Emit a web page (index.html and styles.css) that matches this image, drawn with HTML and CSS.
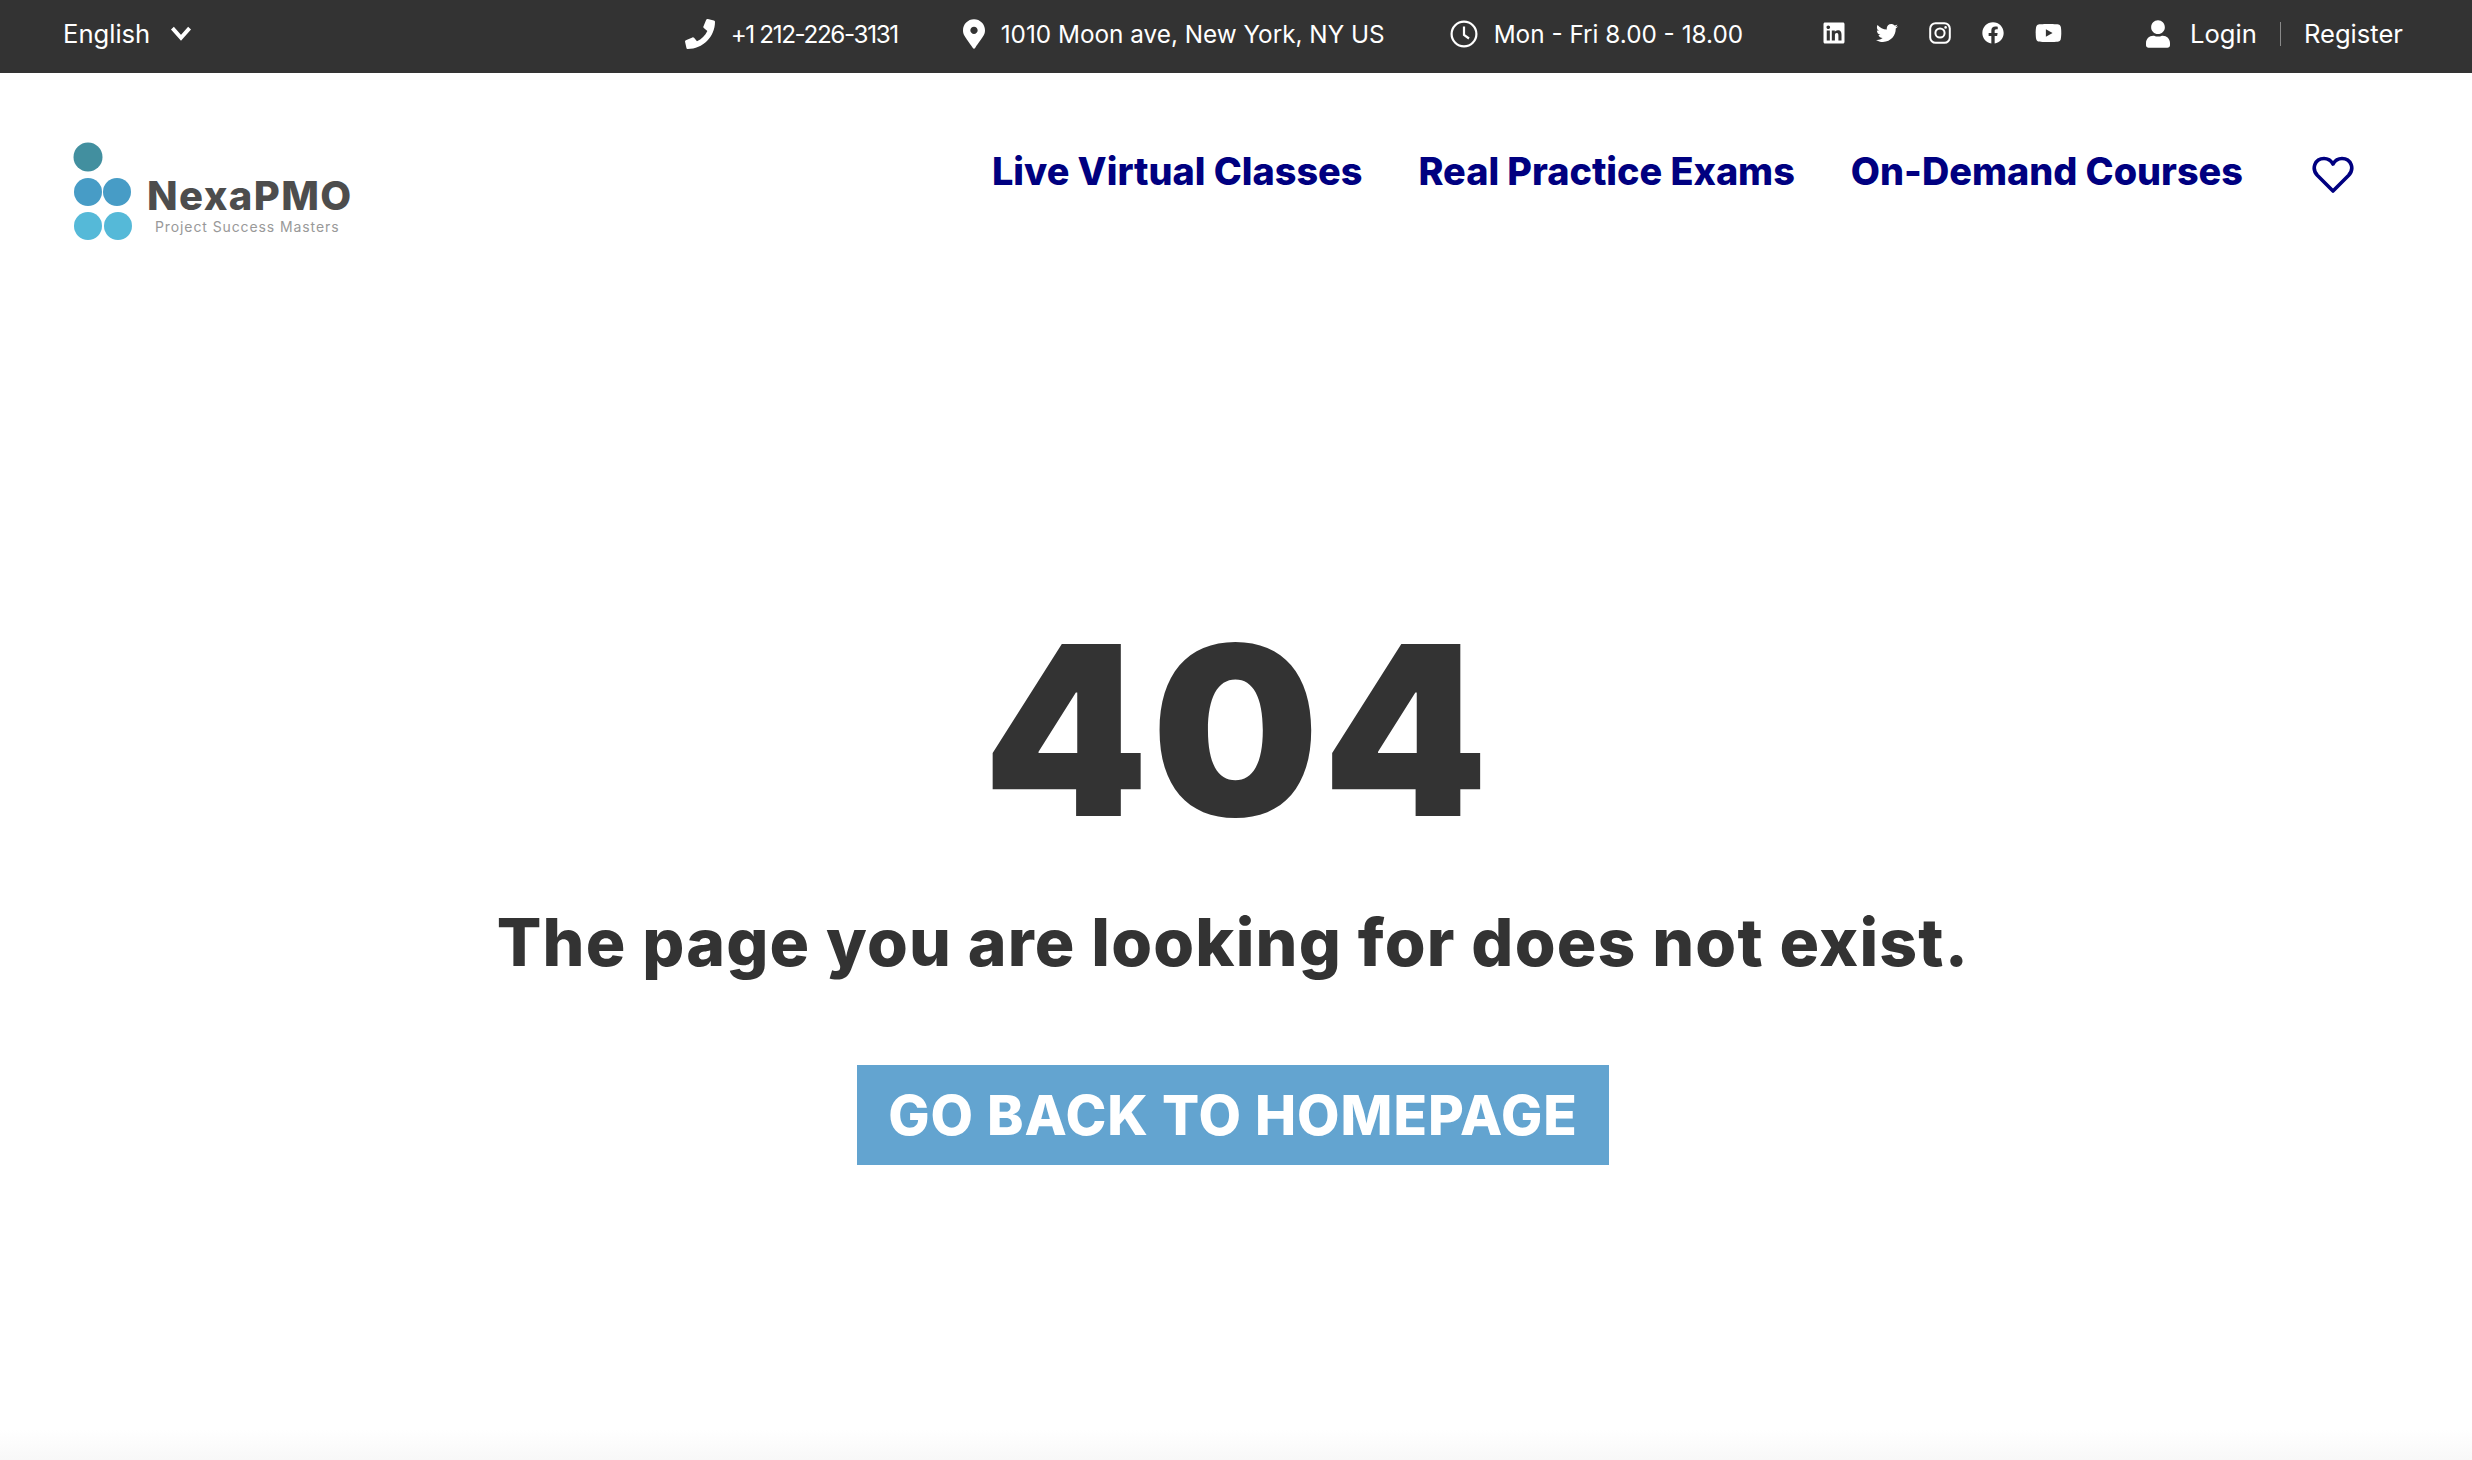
FILE: index.html
```html
<!DOCTYPE html>
<html lang="en">
  <head>
    <meta charset="UTF-8" />
    <meta name="viewport" content="width=device-width, initial-scale=1.0" />
    <title>NexaPMO - Page not found</title>
    <link rel="stylesheet" href="styles.css">
  </head>
  <body>
    <div class="topbar">
      <div class="lang">
        <span>English</span>
        <svg class="chevron" viewBox="0 0 20 14"><polyline points="2,2 10,11 18,2" /></svg>
      </div>

      <div class="contact">
        <div class="contact-item">
          <svg class="icon" viewBox="0 0 512 512"><path d="M493.4 24.6l-104-24c-11.3-2.6-22.9 3.3-27.5 13.9l-48 112c-4.2 9.8-1.4 21.3 6.9 28l60.6 49.6c-36 76.7-98.9 140.5-177.2 177.2l-49.6-60.6c-6.8-8.3-18.2-11.1-28-6.9l-112 48C3.9 366.5-2 378.1.6 389.4l24 104C27.1 504.2 36.7 512 48 512c256.1 0 464-207.5 464-464 0-11.2-7.7-20.9-18.6-23.4z"/></svg>
          <span class="phone-number">+1 212-226-3131</span>
        </div>
        <div class="contact-item">
          <svg class="icon pin" viewBox="0 0 384 512"><path d="M172.268 501.67C26.97 291.031 0 269.413 0 192 0 85.961 85.961 0 192 0s192 85.961 192 192c0 77.413-26.97 99.031-172.268 309.67-9.535 13.774-29.93 13.773-39.464 0zM192 256c35.3 0 64-28.7 64-64s-28.7-64-64-64-64 28.7-64 64 28.7 64 64 64z"/></svg>
          <span>1010 Moon ave, New York, NY US</span>
        </div>
        <div class="contact-item">
          <svg class="icon clock" viewBox="0 0 28 28"><circle cx="14" cy="14" r="12.4" /><polyline points="14,6.5 14,15 19,18.5" /></svg>
          <span>Mon - Fri 8.00 - 18.00</span>
        </div>
      </div>

      <div class="socials">
        <svg class="social" viewBox="0 0 448 512"><path d="M416 32H31.9C14.3 32 0 46.5 0 64.3v383.4C0 465.5 14.3 480 31.9 480H416c17.6 0 32-14.5 32-32.3V64.3c0-17.8-14.4-32.3-32-32.3zM135.4 416H69V202.2h66.5V416zm-33.2-243c-21.3 0-38.5-17.3-38.5-38.5S80.9 96 102.2 96c21.2 0 38.5 17.3 38.5 38.5 0 21.3-17.2 38.5-38.5 38.5zm282.1 243h-66.4V312c0-24.8-.5-56.7-34.5-56.7-34.6 0-39.9 27-39.9 54.9V416h-66.4V202.2h63.7v29.2h.9c8.9-16.8 30.6-34.5 62.9-34.5 67.2 0 79.7 44.3 79.7 101.9V416z"/></svg>
        <svg class="social" viewBox="0 0 512 512"><path d="M459.37 151.716c.325 4.548.325 9.097.325 13.645 0 138.72-105.583 298.558-298.558 298.558-59.452 0-114.68-17.219-161.137-47.106 8.447.974 16.568 1.299 25.34 1.299 49.055 0 94.213-16.568 130.274-44.832-46.132-.975-84.792-31.188-98.112-72.772 6.498.974 12.995 1.624 19.818 1.624 9.421 0 18.843-1.3 27.614-3.573-48.081-9.747-84.143-51.98-84.143-102.985v-1.299c13.969 7.797 30.214 12.67 47.431 13.319-28.264-18.843-46.781-51.005-46.781-87.391 0-19.492 5.197-37.36 14.294-52.954 51.655 63.675 129.3 105.258 216.365 109.807-1.624-7.797-2.599-15.918-2.599-24.04 0-57.828 46.782-104.934 104.934-104.934 30.213 0 57.502 12.67 76.67 33.137 23.715-4.548 46.456-13.32 66.599-25.34-7.798 24.366-24.366 44.833-46.132 57.827 21.117-2.273 41.584-8.122 60.426-16.243-14.292 20.791-32.161 39.308-52.628 54.253z"/></svg>
        <svg class="social insta" viewBox="0 0 22 22"><rect x="1.2" y="1.2" width="19.6" height="19.6" rx="5.4" /><circle cx="11" cy="11" r="4.6" /><circle class="dot" cx="16.6" cy="5.4" r="1.3" /></svg>
        <svg class="social" viewBox="0 0 512 512"><path d="M504 256C504 119 393 8 256 8S8 119 8 256c0 123.78 90.69 226.38 209.25 245V327.69h-63V256h63v-54.64c0-62.15 37-96.48 93.67-96.48 27.14 0 55.52 4.84 55.52 4.84v61h-31.28c-30.8 0-40.41 19.12-40.41 38.73V256h68.78l-11 71.69h-57.78V501C413.31 482.38 504 379.78 504 256z"/></svg>
        <svg class="social yt" viewBox="0 0 576 512"><path d="M549.655 124.083c-6.281-23.65-24.787-42.276-48.284-48.597C458.781 64 288 64 288 64S117.22 64 74.629 75.486c-23.497 6.322-42.003 24.947-48.284 48.597-11.412 42.867-11.412 132.305-11.412 132.305s0 89.438 11.412 132.305c6.281 23.65 24.787 41.5 48.284 47.821C117.22 448 288 448 288 448s170.78 0 213.371-11.486c23.497-6.321 42.003-24.171 48.284-47.821 11.412-42.867 11.412-132.305 11.412-132.305s0-89.438-11.412-132.305zm-317.51 213.508V175.185l142.739 81.205-142.739 81.201z"/></svg>
      </div>

      <div class="account">
        <svg class="icon user" viewBox="0 0 448 512"><path d="M224 256c70.7 0 128-57.3 128-128S294.7 0 224 0 96 57.3 96 128s57.3 128 128 128zm89.6 32h-16.7c-22.2 10.2-46.9 16-72.9 16s-50.6-5.8-72.9-16h-16.7C60.2 288 0 348.2 0 422.4V464c0 26.5 21.5 48 48 48h352c26.5 0 48-21.5 48-48v-41.6c0-74.2-60.2-134.4-134.4-134.4z"/></svg>
        <a class="login" href="#">Login</a>
        <a class="register" href="#">Register</a>
      </div>
    </div>

    <header class="header">
      <a class="logo" href="#">
        <svg class="logo-dots" viewBox="0 0 62 102">
          <circle cx="16" cy="15" r="14.5" fill="#428f9f" />
          <circle cx="16" cy="50" r="14" fill="#479cc6" />
          <circle cx="45" cy="50" r="14" fill="#479cc6" />
          <circle cx="16" cy="84" r="14" fill="#55b9d8" />
          <circle cx="46" cy="84" r="14" fill="#55b9d8" />
        </svg>
        <div class="logo-text">
          <span class="logo-name">NexaPMO</span>
          <span class="logo-tag">Project Success Masters</span>
        </div>
      </a>

      <nav class="nav">
        <a href="#">Live Virtual Classes</a>
        <a href="#">Real Practice Exams</a>
        <a href="#">On-Demand Courses</a>
        <svg class="heart" viewBox="0 0 42 38"><path d="M21 35 L5.5 19.5 C-1 12.5 3 2.5 12 2.5 C16 2.5 19 4.5 21 8 C23 4.5 26 2.5 30 2.5 C39 2.5 43 12.5 36.5 19.5 Z" /></svg>
      </nav>
    </header>

    <main class="error-page">
      <h1 class="error-code">404</h1>
      <h2 class="error-text">The page you are looking for does not exist.</h2>
      <a class="home-btn" href="#">GO BACK TO HOMEPAGE</a>
    </main>

    <div class="bottom-fade"></div>
  </body>
</html>
```

FILE: styles.css
```css
* {
  box-sizing: border-box;
}
html,
body {
  height: 100%;
}
body {
  margin: 0;
  display: flex;
  flex-direction: column;
  font-family: Inter, "Liberation Sans", sans-serif;
  background: #ffffff;
  color: #333333;
  overflow: hidden;
}
a {
  color: inherit;
  text-decoration: none;
}

/* top bar */
.topbar {
  display: flex;
  align-items: center;
  height: 73px;
  padding: 0 69px 6px 63px;
  background: #333333;
  color: #ffffff;
  font-size: 24.3px;
  flex-shrink: 0;
}
.lang {
  display: flex;
  align-items: center;
  gap: 20px;
  font-size: 25.6px;
}
.chevron {
  width: 22px;
  height: 15px;
  fill: none;
  stroke: #ffffff;
  stroke-width: 3.6;
}
.contact {
  display: flex;
  align-items: center;
  gap: 65px;
  margin-left: auto;
}
.contact-item {
  display: flex;
  align-items: center;
  gap: 16px;
}
.phone-number {
  letter-spacing: -1.4px;
}
.icon {
  width: 30px;
  height: 30px;
  fill: #ffffff;
  flex-shrink: 0;
}
.pin {
  width: 22px;
}
.clock {
  width: 28px;
  height: 28px;
  fill: none;
  stroke: #ffffff;
  stroke-width: 2.2;
}
.socials {
  display: flex;
  align-items: center;
  gap: 31px;
  margin-left: 80px;
  margin-bottom: 2px;
}
.social {
  width: 22px;
  height: 24px;
  fill: #ffffff;
}
.insta {
  fill: none;
  stroke: #ffffff;
  stroke-width: 2;
}
.insta .dot {
  fill: #ffffff;
  stroke: none;
}
.yt {
  width: 27px;
}
.account {
  display: flex;
  align-items: center;
  margin-left: 84px;
  font-size: 25.6px;
}
.user {
  width: 24px;
  height: 28px;
  margin-right: 20px;
}
.login {
  padding-right: 23px;
  border-right: 1px solid #8a8a8a;
  line-height: 24px;
}
.register {
  padding-left: 23px;
}

/* logo and nav */
.header {
  display: flex;
  justify-content: space-between;
  align-items: flex-start;
  padding: 69px 118px 0 72px;
  flex-shrink: 0;
}
.logo {
  display: flex;
  align-items: flex-end;
  gap: 13px;
}
.logo-dots {
  width: 62px;
  height: 102px;
}
.logo-text {
  display: flex;
  flex-direction: column;
  padding-bottom: 8px;
}
.logo-name {
  font-size: 40px;
  font-weight: 800;
  line-height: 44px;
  letter-spacing: 1.4px;
  color: #4d4d4d;
}
.logo-tag {
  padding-left: 8px;
  font-size: 14px;
  line-height: 18px;
  letter-spacing: 0.9px;
  color: #999999;
}
.nav {
  display: flex;
  align-items: center;
  gap: 56px;
  padding-top: 6px;
  font-size: 37.8px;
  font-weight: 800;
  color: #000080;
}
.heart {
  width: 42px;
  height: 38px;
  margin-left: 13px;
  margin-top: 8px;
  fill: none;
  stroke: #000080;
  stroke-width: 3.6;
  stroke-linejoin: round;
}

/* 404 */
.error-page {
  flex: 1;
  display: flex;
  flex-direction: column;
  align-items: center;
  padding-top: 366px;
  padding-right: 6px;
}
.error-code {
  margin: 0 0 0 8px;
  font-size: 236px;
  font-weight: 900;
  line-height: 240px;
  letter-spacing: 3px;
  color: #333333;
}
.error-text {
  margin: 52px 0 0;
  font-size: 66px;
  font-weight: 800;
  line-height: 80px;
  letter-spacing: 1.2px;
  color: #333333;
}
.home-btn {
  display: block;
  margin-top: 83px;
  padding: 0 31px;
  height: 100px;
  background: #63a4d0;
  color: #ffffff;
  font-size: 55px;
  font-weight: 800;
  line-height: 100px;
  letter-spacing: 1px;
}
.bottom-fade {
  height: 30px;
  flex-shrink: 0;
  background: linear-gradient(#ffffff, #f8f8f8);
}
```
